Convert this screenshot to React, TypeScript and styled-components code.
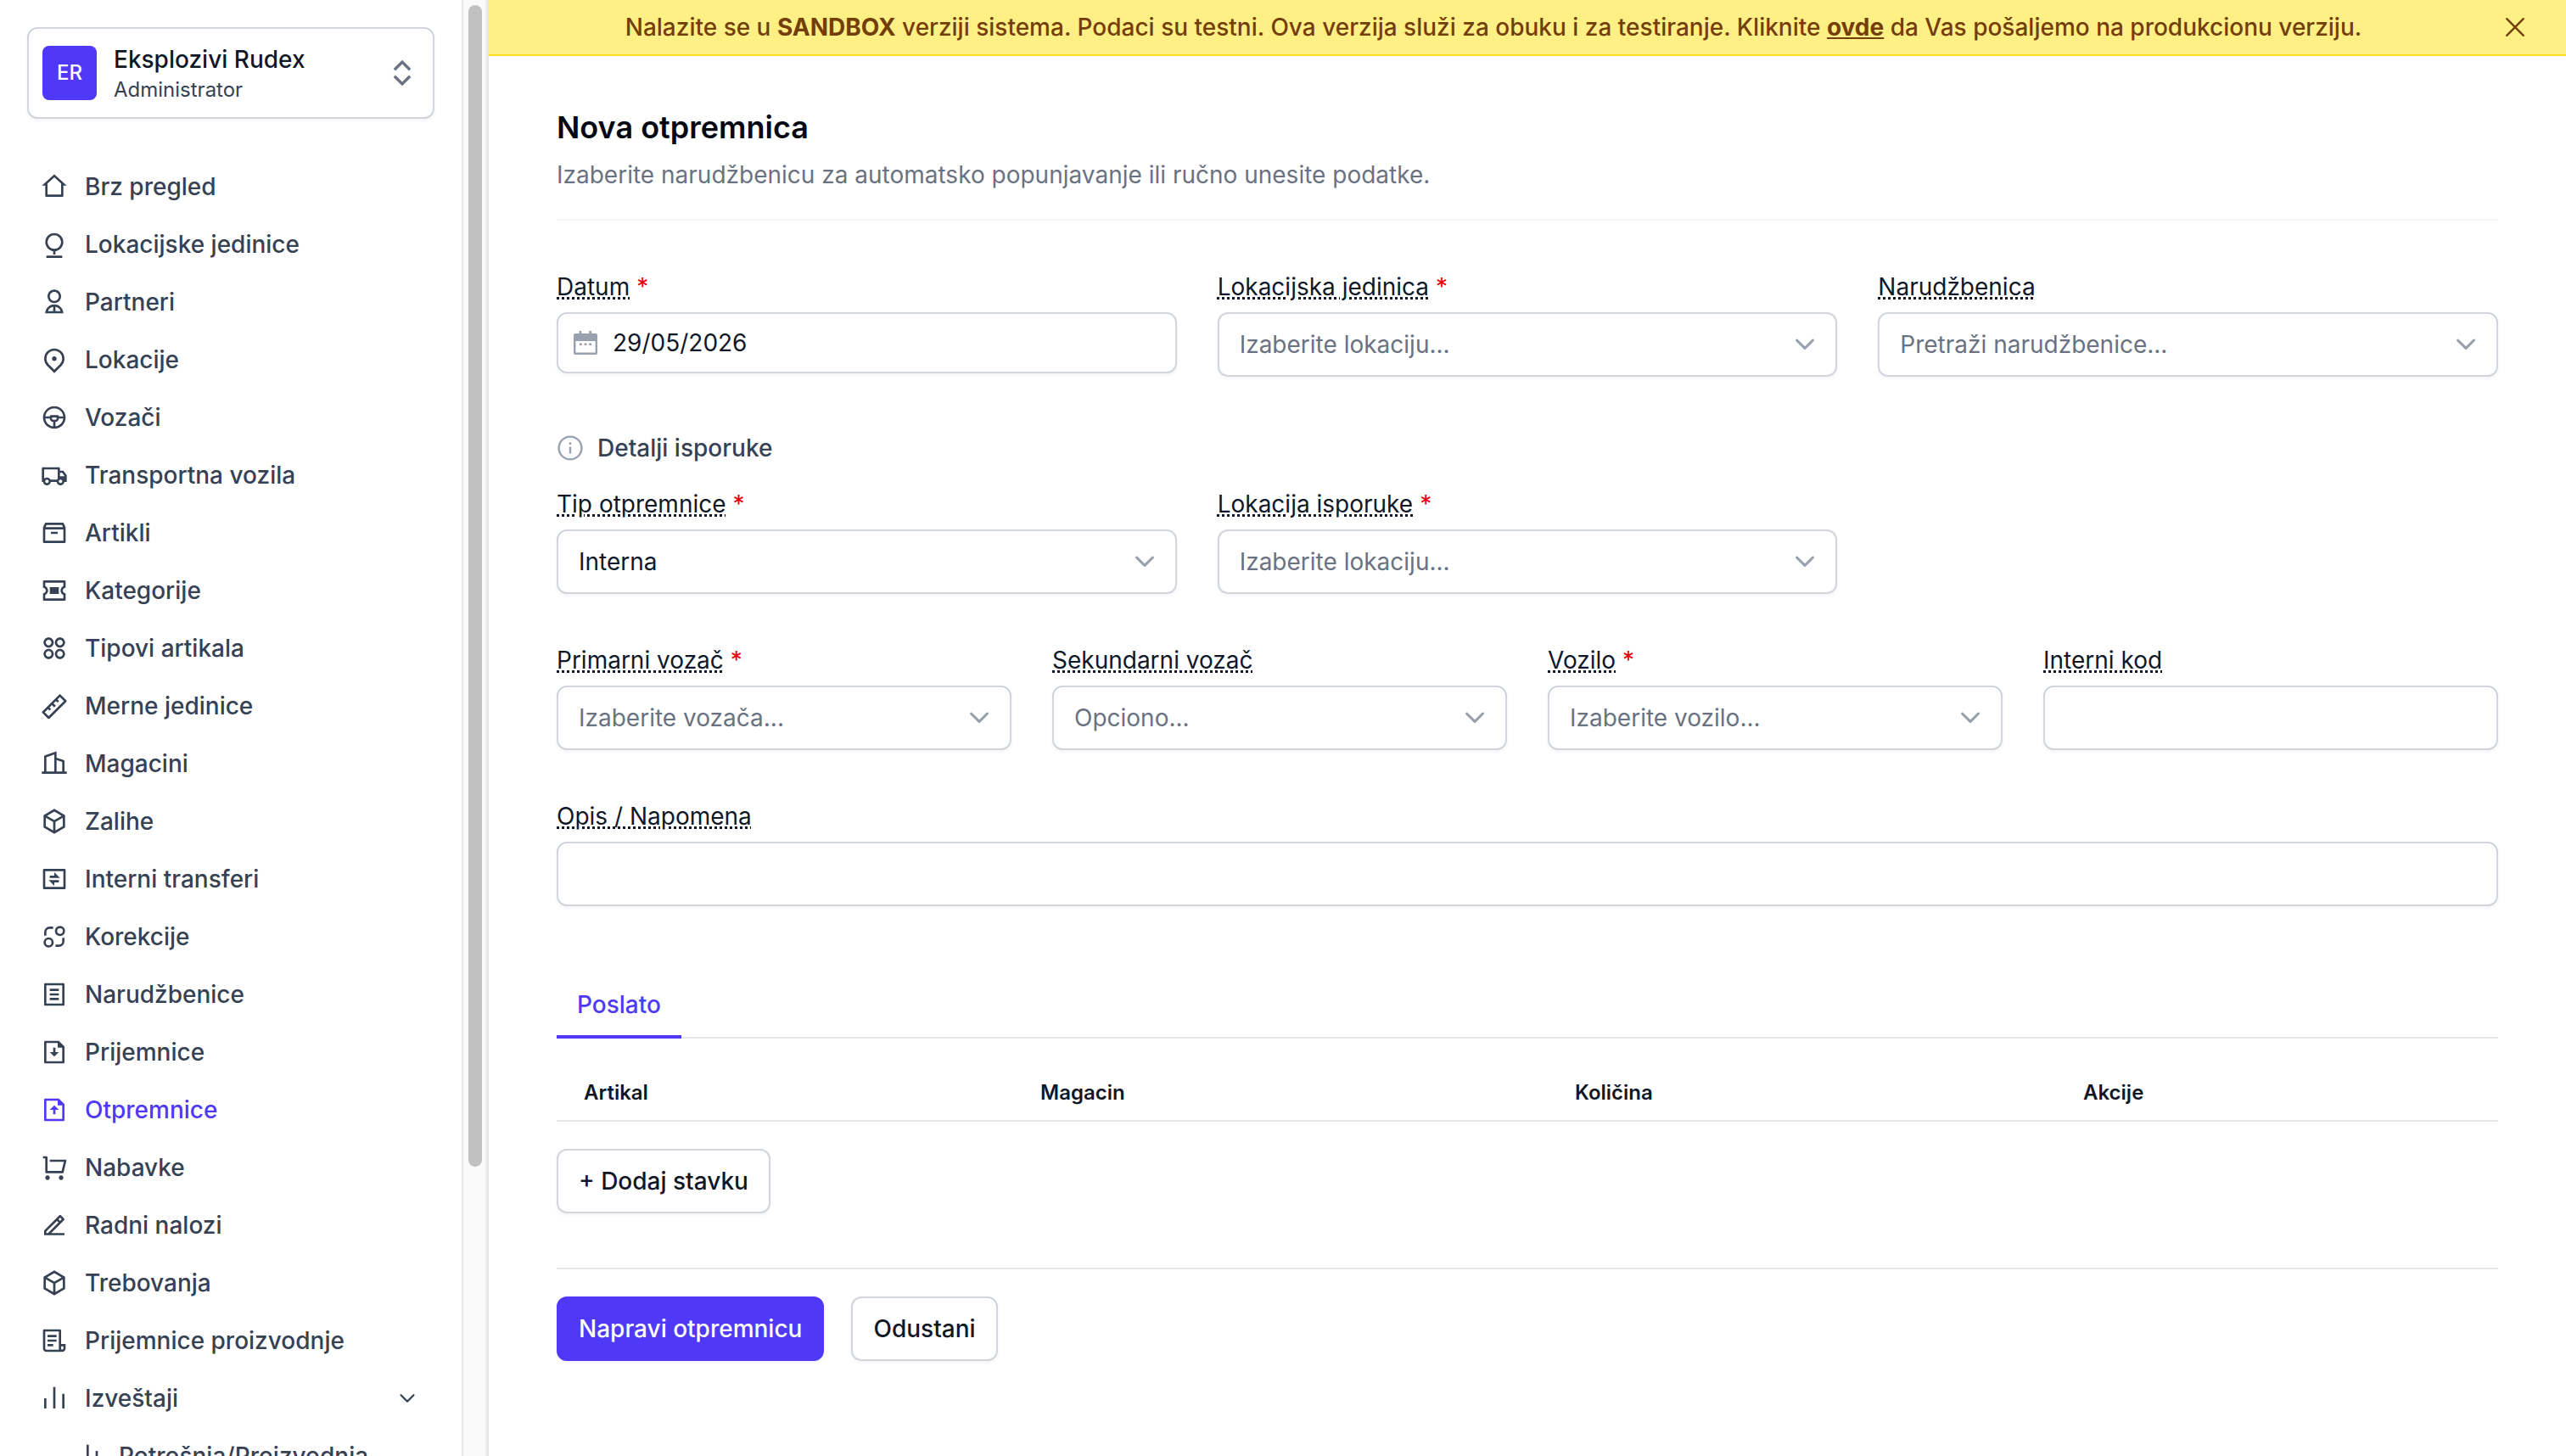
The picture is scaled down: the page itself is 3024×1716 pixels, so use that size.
import React from "react";
import styled, { createGlobalStyle, css } from "styled-components";
import type { IconType } from "react-icons";
import {
  RiHome2Line,
  RiUser2Line,
  RiSteering2Line,
  RiTruckLine,
  RiTicket2Line,
  RiApps2Line,
  RiRulerLine,
  RiBuilding2Line,
  RiBox3Line,
  RiExchangeBoxLine,
  RiFileListLine,
  RiFileDownloadLine,
  RiFileUploadLine,
  RiShoppingCartLine,
  RiEdit2Line,
  RiFileList3Line,
  RiBarChartLine,
  RiExpandUpDownLine,
} from "react-icons/ri";

const color = {
  ink: "#101828",
  text: "#364153",
  muted: "#6a7282",
  faint: "#99a1af",
  border: "#d1d5dc",
  line: "#e5e7eb",
  accent: "#4f39f6",
  required: "#e7000b",
};

const GlobalStyle = createGlobalStyle`
  *, *::before, *::after { box-sizing: border-box; }
  html, body { margin: 0; background: #fff; }
  body {
    font-family: Inter, "Liberation Sans", sans-serif;
    font-size: 28px;
    line-height: 40px;
    color: ${color.ink};
    -webkit-font-smoothing: antialiased;
  }
  button, input { font: inherit; color: inherit; }
  svg { display: block; flex: none; }
`;

const Shell = styled.div`
  display: flex;
  height: 1716px;
  overflow: hidden;
`;

/* Sidebar */

const Sidebar = styled.aside`
  display: flex;
  flex: none;
  width: 576px;
  border-right: 2px solid ${color.line};
`;

const SidebarBody = styled.div`
  flex: 1;
  min-width: 0;
  padding: 32px 32px 0;
  overflow: hidden;
`;

const ScrollTrack = styled.div`
  flex: none;
  width: 30px;
  padding: 6px 6px 0;
  background: #fafafa;
  border-left: 2px solid #e8e8e8;
  border-right: 2px solid #ededed;
`;

const ScrollThumb = styled.div`
  width: 16px;
  height: 1369px;
  border-radius: 8px;
  background: #c1c1c1;
`;

const raised = css`
  border: 2px solid ${color.border};
  border-radius: 12px;
  background: #fff;
  box-shadow: 0 2px 4px rgba(0, 0, 0, 0.05);
`;

const Account = styled.button`
  ${raised}
  display: flex;
  align-items: center;
  width: 480px;
  height: 108px;
  padding: 0 16px;
  text-align: left;
`;

const Avatar = styled.span`
  display: flex;
  align-items: center;
  justify-content: center;
  width: 64px;
  height: 64px;
  border-radius: 8px;
  background: ${color.accent};
  color: #fff;
  font-size: 24px;
  font-weight: 500;
`;

const AccountText = styled.span`
  display: flex;
  flex: 1;
  flex-direction: column;
  margin-left: 20px;
`;

const AccountName = styled.span`
  font-weight: 500;
  line-height: 40px;
`;

const AccountRole = styled.span`
  font-size: 24px;
  line-height: 32px;
  color: ${color.text};
`;

const Nav = styled.nav`
  display: flex;
  flex-direction: column;
  gap: 4px;
  margin-top: 48px;
`;

const NavItem = styled.a<{ $active?: boolean; $nested?: boolean }>`
  display: flex;
  flex: none;
  align-items: center;
  gap: ${(p) => (p.$nested ? 10 : 20)}px;
  height: 64px;
  padding: 0 12px 0 ${(p) => (p.$nested ? 66 : 16)}px;
  font-weight: 500;
  white-space: nowrap;
  color: ${(p) => (p.$active ? color.accent : color.text)};
`;

const NavLabel = styled.span`
  flex: 1;
`;

/* Main column */

const Main = styled.main`
  flex: 1;
  min-width: 0;
`;

const Banner = styled.div`
  display: flex;
  align-items: center;
  gap: 24px;
  height: 66px;
  padding: 0 40px 0 24px;
  background: #fff085;
  border-bottom: 2px solid #ffdf20;
  color: #733e0a;
`;

const BannerText = styled.p`
  flex: 1;
  margin: 0;
  font-weight: 500;
  text-align: center;
  white-space: nowrap;

  b { font-weight: 700; }
`;

const BannerLink = styled.a`
  font-weight: 700;
  text-decoration: underline;
`;

const Page = styled.div`
  padding: 60px 80px 0;
`;

const PageHeader = styled.header`
  height: 134px;
  border-bottom: 2px solid #f3f4f6;
`;

const Title = styled.h1`
  margin: 0;
  font-size: 36px;
  line-height: 48px;
  font-weight: 600;
  color: #030712;
`;

const Subtitle = styled.p`
  margin: 12px 0 0;
  color: ${color.muted};
`;

const FieldGrid = styled.div<{ $cols: number; $top: number }>`
  display: grid;
  grid-template-columns: repeat(${(p) => p.$cols}, 1fr);
  align-items: start;
  column-gap: 48px;
  margin-top: ${(p) => p.$top}px;
`;

const FieldBox = styled.div`
  display: flex;
  flex-direction: column;
  gap: 10px;
`;

const FieldLabel = styled.label`
  font-weight: 400;
`;

const LabelText = styled.span`
  text-decoration: underline dotted;
`;

const Required = styled.span`
  margin-left: 8px;
  color: ${color.required};
`;

const Control = styled.div<{ $height?: number; $placeholder?: boolean }>`
  ${raised}
  display: flex;
  align-items: center;
  justify-content: space-between;
  height: ${(p) => p.$height ?? 76}px;
  padding: 0 24px;
  color: ${(p) => (p.$placeholder ? color.muted : color.ink)};
`;

const DateControl = styled(Control)`
  justify-content: flex-start;
  gap: 18px;
  padding: 0 18px;
`;

const TextInput = styled.input`
  ${raised}
  width: 100%;
  height: 76px;
  padding: 0 24px;
  outline: none;
`;

const SectionTitle = styled.h2`
  display: flex;
  align-items: center;
  gap: 16px;
  margin: 64px 0 0;
  font-size: 28px;
  font-weight: 500;
  color: ${color.text};
`;

const Tabs = styled.div`
  display: flex;
  margin-top: 76px;
  box-shadow: inset 0 -2px 0 ${color.line};
`;

const Tab = styled.button`
  height: 80px;
  padding: 3px 24px 0;
  border: 0;
  border-bottom: 4px solid ${color.accent};
  background: none;
  font-weight: 500;
  color: ${color.accent};
`;

const TableHead = styled.div`
  display: grid;
  grid-template-columns: 538px 630px 599px 1fr;
  height: 98px;
  padding-top: 44px;
  border-bottom: 2px solid ${color.line};
  font-size: 24px;
  font-weight: 600;
`;

const HeadCell = styled.span`
  padding-left: 32px;
`;

const Button = styled.button<{ $primary?: boolean }>`
  ${raised}
  height: 76px;
  padding: 0 24px;
  font-weight: 500;
  white-space: nowrap;
  ${(p) =>
    p.$primary &&
    css`
      border-color: ${color.accent};
      background: ${color.accent};
      color: #fff;
    `}
`;

const TableActions = styled.div`
  display: flex;
  padding: 32px 0 64px;
  border-bottom: 2px solid ${color.line};
`;

const FormActions = styled.div`
  display: flex;
  gap: 32px;
  padding-top: 32px;
`;

/* Icons that the icon set lacks */

type IconProps = { size?: number };

const PinOnBase = ({ size = 32 }: IconProps) => (
  <svg width={size} height={size} viewBox="0 0 24 24" fill="none" stroke="currentColor" strokeWidth="2">
    <circle cx="12" cy="10" r="7" />
    <path d="M12 17v4M5 23h14" />
  </svg>
);

const PinWithDot = ({ size = 32 }: IconProps) => (
  <svg width={size} height={size} viewBox="0 0 24 24" fill="currentColor">
    <path d="M12 23.728 5.636 17.364a9 9 0 1 1 12.728 0L12 23.728Zm4.95-7.778a7 7 0 1 0-9.9 0L12 20.9l4.95-4.95ZM12 13a2 2 0 1 1 0-4 2 2 0 0 1 0 4Z" />
  </svg>
);

const ArchiveBox = ({ size = 32 }: IconProps) => (
  <svg width={size} height={size} viewBox="0 0 24 24" fill="currentColor">
    <path
      fillRule="evenodd"
      d="M20 3l2 4v13a1 1 0 0 1-1 1H3a1 1 0 0 1-1-1V7l2-4h16Zm0 6H4v10h16V9Zm-1.24-4H5.24l-1 2h15.52l-1-2ZM15 11v2H9v-2h6Z"
    />
  </svg>
);

const SwapCircles = ({ size = 32 }: IconProps) => (
  <svg width={size} height={size} viewBox="0 0 24 24" fill="none" stroke="currentColor" strokeWidth="2">
    <circle cx="17" cy="7" r="3.5" />
    <circle cx="7" cy="17" r="3.5" />
    <path d="M4 11V8a4 4 0 0 1 4-4h3M20 13v3a4 4 0 0 1-4 4h-3" />
  </svg>
);

const DescendingBars = ({ size = 32 }: IconProps) => (
  <svg width={size} height={size} viewBox="0 0 24 24" fill="currentColor">
    <path d="M3 2h2v19H3zM11 7.5h2V21h-2zM19 14h2v7h-2z" />
  </svg>
);

const FieldChevron = () => (
  <svg width="24" height="16" viewBox="0 0 24 16" fill="none" stroke={color.faint} strokeWidth="3.1" strokeLinecap="round" strokeLinejoin="round">
    <path d="M2.6 3.2 12 12.3 21.4 3.2" />
  </svg>
);

const NavChevron = () => (
  <svg width="40" height="40" viewBox="0 0 40 40" fill="none" stroke="currentColor" strokeWidth="2.3" strokeLinecap="round" strokeLinejoin="round">
    <path d="M12.6 16.2 20 23.8 27.4 16.2" />
  </svg>
);

const CloseIcon = () => (
  <svg width="40" height="40" viewBox="0 0 40 40" fill="none" stroke="currentColor" strokeWidth="2.4" strokeLinecap="round">
    <path d="M10.2 10.2 29.8 29.8M29.8 10.2 10.2 29.8" />
  </svg>
);

const CalendarIcon = () => (
  <svg width="28" height="28" viewBox="0 0 28 28" fill={color.faint}>
    <path fillRule="evenodd" d="M6.5 0h2.8v3h9V0h2.8v3H26a2 2 0 0 1 2 2v21a2 2 0 0 1-2 2H2a2 2 0 0 1-2-2V5a2 2 0 0 1 2-2h4.5zM2.4 12v13.4h23.2V12z" />
    <path d="M7 14.5h2.8v2.6H7zM12.6 14.5h2.8v2.6h-2.8zM18.2 14.5H21v2.6h-2.8z" />
  </svg>
);

const InfoIcon = () => (
  <svg width="32" height="32" viewBox="0 0 32 32" fill="none" stroke={color.faint} strokeWidth="2.4">
    <circle cx="16" cy="16" r="13.4" />
    <path d="M16 14.5v8" />
    <path d="M16 9.4v2.6" />
  </svg>
);

type NavEntry = {
  label: string;
  icon: IconType | React.FC<IconProps>;
  active?: boolean;
  nested?: boolean;
  expandable?: boolean;
};

const navEntries: NavEntry[] = [
  { label: "Brz pregled", icon: RiHome2Line },
  { label: "Lokacijske jedinice", icon: PinOnBase },
  { label: "Partneri", icon: RiUser2Line },
  { label: "Lokacije", icon: PinWithDot },
  { label: "Vozači", icon: RiSteering2Line },
  { label: "Transportna vozila", icon: RiTruckLine },
  { label: "Artikli", icon: ArchiveBox },
  { label: "Kategorije", icon: RiTicket2Line },
  { label: "Tipovi artikala", icon: RiApps2Line },
  { label: "Merne jedinice", icon: RiRulerLine },
  { label: "Magacini", icon: RiBuilding2Line },
  { label: "Zalihe", icon: RiBox3Line },
  { label: "Interni transferi", icon: RiExchangeBoxLine },
  { label: "Korekcije", icon: SwapCircles },
  { label: "Narudžbenice", icon: RiFileListLine },
  { label: "Prijemnice", icon: RiFileDownloadLine },
  { label: "Otpremnice", icon: RiFileUploadLine, active: true },
  { label: "Nabavke", icon: RiShoppingCartLine },
  { label: "Radni nalozi", icon: RiEdit2Line },
  { label: "Trebovanja", icon: RiBox3Line },
  { label: "Prijemnice proizvodnje", icon: RiFileList3Line },
  { label: "Izveštaji", icon: RiBarChartLine, expandable: true },
  { label: "Potrošnja/Proizvodnja", icon: DescendingBars, nested: true },
];

const Field = ({ label, required, children }: { label: string; required?: boolean; children: React.ReactNode }) => (
  <FieldBox>
    <FieldLabel>
      <LabelText>{label}</LabelText>
      {required && <Required>*</Required>}
    </FieldLabel>
    {children}
  </FieldBox>
);

const Select = ({ value, placeholder }: { value?: string; placeholder?: string }) => (
  <Control role="combobox" $placeholder={!value}>
    <span>{value ?? placeholder}</span>
    <FieldChevron />
  </Control>
);

export default function App() {
  return (
    <>
      <GlobalStyle />
      <Shell>
        <Sidebar>
          <SidebarBody>
            <Account>
              <Avatar>ER</Avatar>
              <AccountText>
                <AccountName>Eksplozivi Rudex</AccountName>
                <AccountRole>Administrator</AccountRole>
              </AccountText>
              <RiExpandUpDownLine size={40} color={color.muted} />
            </Account>
            <Nav>
              {navEntries.map(({ label, icon: Icon, active, nested, expandable }) => (
                <NavItem key={label} $active={active} $nested={nested}>
                  <Icon size={32} />
                  <NavLabel>{label}</NavLabel>
                  {expandable && <NavChevron />}
                </NavItem>
              ))}
            </Nav>
          </SidebarBody>
          <ScrollTrack>
            <ScrollThumb />
          </ScrollTrack>
        </Sidebar>

        <Main>
          <Banner>
            <BannerText>
              Nalazite se u <b>SANDBOX</b> verziji sistema. Podaci su testni. Ova verzija služi za obuku i za
              testiranje. Kliknite <BannerLink>ovde</BannerLink> da Vas pošaljemo na produkcionu verziju.
            </BannerText>
            <CloseIcon />
          </Banner>

          <Page>
            <PageHeader>
              <Title>Nova otpremnica</Title>
              <Subtitle>Izaberite narudžbenicu za automatsko popunjavanje ili ručno unesite podatke.</Subtitle>
            </PageHeader>

            <FieldGrid $cols={3} $top={58}>
              <Field label="Datum" required>
                <DateControl $height={72}>
                  <CalendarIcon />
                  <span>29/05/2026</span>
                </DateControl>
              </Field>
              <Field label="Lokacijska jedinica" required>
                <Select placeholder="Izaberite lokaciju..." />
              </Field>
              <Field label="Narudžbenica">
                <Select placeholder="Pretraži narudžbenice..." />
              </Field>
            </FieldGrid>

            <SectionTitle>
              <InfoIcon />
              Detalji isporuke
            </SectionTitle>

            <FieldGrid $cols={3} $top={26}>
              <Field label="Tip otpremnice" required>
                <Select value="Interna" />
              </Field>
              <Field label="Lokacija isporuke" required>
                <Select placeholder="Izaberite lokaciju..." />
              </Field>
            </FieldGrid>

            <FieldGrid $cols={4} $top={58}>
              <Field label="Primarni vozač" required>
                <Select placeholder="Izaberite vozača..." />
              </Field>
              <Field label="Sekundarni vozač">
                <Select placeholder="Opciono..." />
              </Field>
              <Field label="Vozilo" required>
                <Select placeholder="Izaberite vozilo..." />
              </Field>
              <Field label="Interni kod">
                <TextInput />
              </Field>
            </FieldGrid>

            <FieldGrid $cols={1} $top={58}>
              <Field label="Opis / Napomena">
                <TextInput />
              </Field>
            </FieldGrid>

            <Tabs>
              <Tab>Poslato</Tab>
            </Tabs>
            <TableHead>
              <HeadCell>Artikal</HeadCell>
              <HeadCell>Magacin</HeadCell>
              <HeadCell>Količina</HeadCell>
              <HeadCell>Akcije</HeadCell>
            </TableHead>
            <TableActions>
              <Button>+ Dodaj stavku</Button>
            </TableActions>
            <FormActions>
              <Button $primary>Napravi otpremnicu</Button>
              <Button>Odustani</Button>
            </FormActions>
          </Page>
        </Main>
      </Shell>
    </>
  );
}
